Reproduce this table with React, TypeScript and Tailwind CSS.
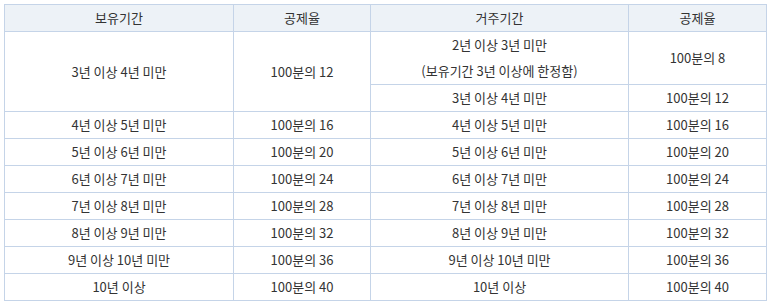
const rows: [string, string, string, string][] = [
  ["4년 이상 5년 미만", "100분의 16", "4년 이상 5년 미만", "100분의 16"],
  ["5년 이상 6년 미만", "100분의 20", "5년 이상 6년 미만", "100분의 20"],
  ["6년 이상 7년 미만", "100분의 24", "6년 이상 7년 미만", "100분의 24"],
  ["7년 이상 8년 미만", "100분의 28", "7년 이상 8년 미만", "100분의 28"],
  ["8년 이상 9년 미만", "100분의 32", "8년 이상 9년 미만", "100분의 32"],
  ["9년 이상 10년 미만", "100분의 36", "9년 이상 10년 미만", "100분의 36"],
  ["10년 이상", "100분의 40", "10년 이상", "100분의 40"],
];

const td = "border border-[#c5d4e8] p-0 text-center align-middle";

export default function App() {
  return (
    <div className="min-h-[305px] bg-white px-[4px] pt-[4px] font-['Noto_Sans_CJK_KR','Noto_Sans',sans-serif] text-[13px] leading-[26px] text-[#333]">
      <table className="w-[762px] table-fixed border-collapse">
        <colgroup>
          <col className="w-[229px]" />
          <col className="w-[137px]" />
          <col className="w-[258px]" />
          <col className="w-[138px]" />
        </colgroup>
        <thead>
          <tr className="bg-[#edf2f7]">
            <th className={`${td} font-normal`}>보유기간</th>
            <th className={`${td} font-normal`}>공제율</th>
            <th className={`${td} font-normal`}>거주기간</th>
            <th className={`${td} font-normal`}>공제율</th>
          </tr>
        </thead>
        <tbody>
          <tr>
            <td rowSpan={2} className={td}>3년 이상 4년 미만</td>
            <td rowSpan={2} className={td}>100분의 12</td>
            <td className={td}>
              2년 이상 3년 미만
              <br />
              (보유기간 3년 이상에 한정함)
            </td>
            <td className={td}>100분의 8</td>
          </tr>
          <tr>
            <td className={td}>3년 이상 4년 미만</td>
            <td className={td}>100분의 12</td>
          </tr>
          {rows.map((r) => (
            <tr key={r[0]}>
              {r.map((c, i) => (
                <td key={i} className={td}>{c}</td>
              ))}
            </tr>
          ))}
        </tbody>
      </table>
    </div>
  );
}
